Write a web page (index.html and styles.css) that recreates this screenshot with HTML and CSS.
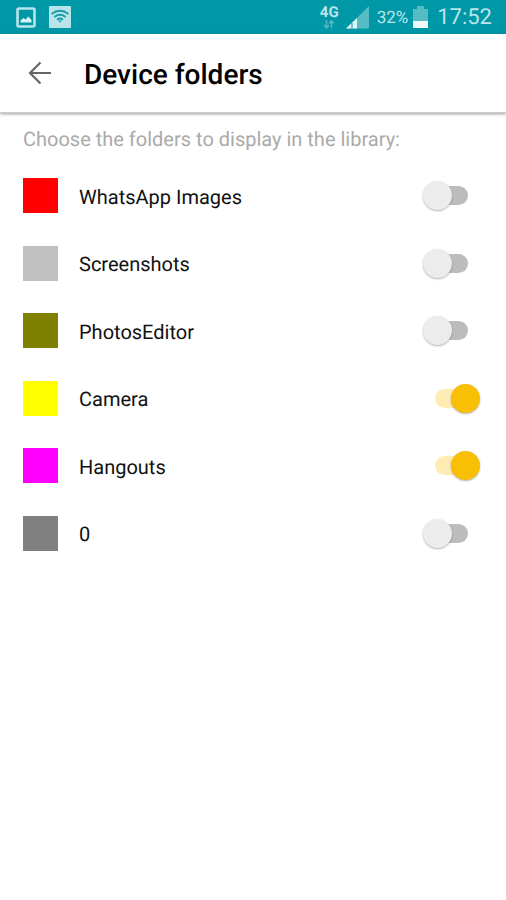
FILE: index.html
```html
<!DOCTYPE html>
<html lang="en">
<head>
<meta charset="utf-8">
<meta name="viewport" content="width=device-width, initial-scale=1">
<title>Device folders</title>
<link rel="stylesheet" href="styles.css">
</head>
<body>
<div class="status">
  <svg class="status-picture" width="20" height="21" viewBox="0 0 20 21" aria-hidden="true">
    <rect x="1.5" y="1.5" width="17" height="18" rx="1.5" fill="none" stroke="#b9e5ea" stroke-width="2.600"/>
    <path d="M4.500 15.500v-2l3-2.500 2 1.500 3-3 3 3.500v2.500z" fill="#d5f2f5"/>
  </svg>
  <svg class="status-wifi" width="22" height="22" viewBox="0 0 22 22" aria-hidden="true">
    <rect width="22" height="22" rx="1" fill="#b9e5ea"/>
    <g fill="none" stroke="#1a9dab" stroke-width="1.800">
      <path d="M2.500 8q8.500-6.500 17 0"/>
      <path d="M5.200 11q5.800-4.500 11.600 0"/>
      <path d="M8 13.700q3-2.500 6 0"/>
    </g>
    <path d="M9.200 14.500h3.600L11 16.800z" fill="#1a9dab"/>
  </svg>
  <div class="network">
    <span>4G</span>
    <svg width="12" height="9" viewBox="0 0 12 9" aria-hidden="true">
      <path d="M3.500 0v7M1 5l2.500 3L6 5M8.500 8V1M6.500 3.500l2-3 2 3" fill="none" stroke="#55b8c3" stroke-width="1.400"/>
    </svg>
  </div>
  <svg class="signal" width="24" height="23" viewBox="0 0 24 23" aria-hidden="true">
    <path d="M0 22.500 23 0v22.500z" fill="#55bbc5"/>
    <path d="M0 22.500 11 12v10.500z" fill="#e2f6f8"/>
    <path d="M6 17v5.500" stroke="#0097a7"/>
  </svg>
  <span class="percent">32%</span>
  <svg class="battery" width="15" height="22" viewBox="0 0 15 22" aria-hidden="true">
    <path d="M0 3h4V0h7v3h4v19H0z" fill="#55bbc5"/>
    <path d="M0 15h15v7H0z" fill="#f0fafb"/>
  </svg>
  <time class="clock">17:52</time>
</div>
<header class="appbar">
  <button class="back" type="button" aria-label="Back">
    <svg width="24" height="24" viewBox="0 0 24 24" aria-hidden="true">
      <path d="M23 12H2M12.500 1.500 2 12l10.500 10.500" fill="none" stroke="#666" stroke-width="2.200"/>
    </svg>
  </button>
  <h1>Device folders</h1>
</header>
<main>
  <p class="hint">Choose the folders to display in the library:</p>
  <ul class="folders">
    <li><label><span class="swatch red"></span><span class="name">WhatsApp Images</span><input type="checkbox" role="switch"></label></li>
    <li><label><span class="swatch silver"></span><span class="name">Screenshots</span><input type="checkbox" role="switch"></label></li>
    <li><label><span class="swatch olive"></span><span class="name">PhotosEditor</span><input type="checkbox" role="switch"></label></li>
    <li><label><span class="swatch yellow"></span><span class="name">Camera</span><input type="checkbox" role="switch" checked></label></li>
    <li><label><span class="swatch magenta"></span><span class="name">Hangouts</span><input type="checkbox" role="switch" checked></label></li>
    <li><label><span class="swatch gray"></span><span class="name">0</span><input type="checkbox" role="switch"></label></li>
  </ul>
</main>
</body>
</html>
```

FILE: styles.css
```css
* {
  box-sizing: border-box;
}

body {
  margin: 0;
  background: #fff;
  color: #111;
  font-family: Roboto, sans-serif;
  font-size: 20px;
  line-height: 24px;
  text-rendering: geometricPrecision;
}

.status {
  display: flex;
  align-items: center;
  height: 34px;
  padding: 0 14px 0 16px;
  background: #0097a7;
  color: #b9e5ea;
}

.status-wifi {
  margin-left: 13px;
}

.network {
  display: flex;
  flex-direction: column;
  align-items: center;
  margin-left: auto;
  font-size: 15px;
  font-weight: 700;
  line-height: 15px;
}

.signal {
  margin-left: 7px;
}

.percent {
  margin: 2px 0 0 7px;
  font-size: 17px;
}

.battery {
  margin-left: 5px;
}

.clock {
  margin: 2px 0 0 9px;
  font-size: 22px;
}

.appbar {
  display: flex;
  align-items: center;
  height: 79px;
  padding: 0 28px;
  border-bottom: 1px solid #ccc;
  box-shadow: 0 1px 3px rgba(0, 0, 0, 0.4);
}

.back {
  display: flex;
  padding: 0;
  border: 0;
  background: none;
}

h1 {
  margin: 4px 0 0 32px;
  color: #000;
  font-size: 28px;
  font-weight: 500;
  line-height: 32px;
}

.hint {
  margin: 0;
  padding: 14px 23px 11px;
  color: #aaa;
}

.folders {
  display: grid;
  grid-auto-rows: 1fr;
  min-height: 405px;
  margin: 0;
  padding: 0;
  list-style: none;
}

.folders label {
  display: flex;
  align-items: center;
  height: 100%;
  padding: 0 26px 0 23px;
}

.swatch {
  width: 35px;
  height: 35px;
  margin-right: 21px;
}

.red { background: #f00; }
.silver { background: #c0c0c0; }
.olive { background: #808000; }
.yellow { background: #ff0; }
.magenta { background: #f0f; }
.gray { background: #808080; }

.name {
  flex: 1;
  padding-top: 2px;
}

input {
  display: grid;
  align-items: center;
  width: 57px;
  height: 29px;
  margin: 0;
  appearance: none;
}

input::before,
input::after {
  grid-area: 1 / 1;
  content: "";
}

input::before {
  justify-self: center;
  width: 33px;
  height: 19px;
  border-radius: 10px;
  background: #bcbcbc;
}

input::after {
  width: 29px;
  height: 29px;
  border-radius: 50%;
  background: #ececec;
  box-shadow: 0 1px 2px rgba(0, 0, 0, 0.3);
}

input:checked::before {
  background: #ffecb3;
}

input:checked::after {
  justify-self: end;
  background: #f9bf05;
}
```
